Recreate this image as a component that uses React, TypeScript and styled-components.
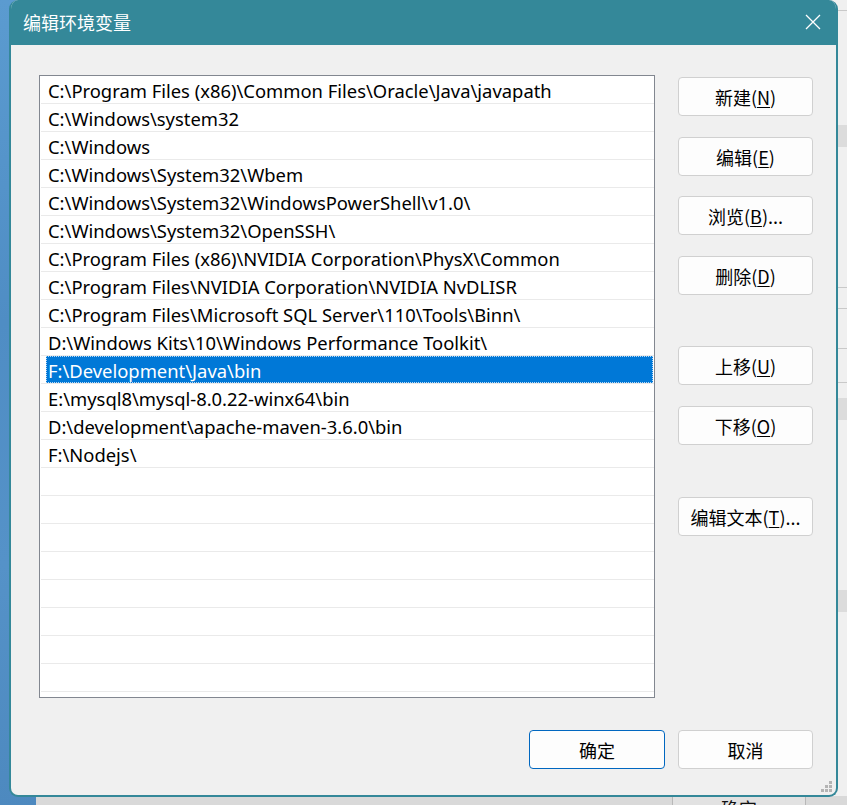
import React from "react";
import styled, { createGlobalStyle, css } from "styled-components";

const Global = createGlobalStyle`
  html, body { margin: 0; padding: 0; }
  body { width: 847px; height: 805px; overflow: hidden; background: #e9e9e9; }
  * { box-sizing: border-box; }
`;

const UI_FONT = `"Noto Sans", "Noto Sans CJK SC", sans-serif`;
const CJK_FONT = `"Noto Sans CJK SC", "Noto Sans", sans-serif`;

const Desktop = styled.div`
  position: relative;
  width: 847px;
  height: 805px;
  overflow: hidden;
  display: grid;
  grid-template-columns: 36px 1fr;
  background: #e6e6e6;
`;

const BlueStrip = styled.div`
  background: linear-gradient(180deg, #5b9bd0 0%, #4f8dc4 40%, #5592c8 70%, #4d89bf 100%);
`;

const GrayWindow = styled.div`
  background: #f0f0f0;
  display: flex;
  flex-direction: column;
`;

const BgLine = styled.div<{ $y: number; $band?: boolean }>`
  height: ${(p) => (p.$band ? 22 : 1)}px;
  margin-top: ${(p) => p.$y}px;
  background: ${(p) => (p.$band ? "#dcdcdc" : "#c9c9c9")};
`;

const BottomBar = styled.div`
  margin-top: auto;
  height: 9px;
  background: #d9d9d9;
  display: flex;
  padding-left: 636px;
`;

const BgButton = styled.div`
  width: 134px;
  border-left: 1px solid #b8b8b8;
  border-right: 1px solid #b8b8b8;
  background: #e2e2e2;
  font-family: ${CJK_FONT};
  font-size: 18px;
  line-height: 18px;
  color: #111;
  text-align: center;
  padding-top: 3px;
  overflow: hidden;
`;

const Dialog = styled.div`
  position: absolute;
  left: 9px;
  top: 0;
  width: 829px;
  height: 797px;
  border: 2px solid #348899;
  border-top: none;
  border-radius: 9px;
  background: #f0f0f0;
  overflow: hidden;
  display: flex;
  flex-direction: column;
`;

const TitleBar = styled.div`
  height: 45px;
  flex: none;
  background: #348899;
  display: flex;
  align-items: center;
  justify-content: space-between;
  padding: 0 17px 2px 12px;
  margin: 0 -2px;
`;

const Title = styled.div`
  font-family: ${CJK_FONT};
  font-size: 18px;
  color: #ffffff;
  padding-left: 2px;
`;

const CloseBtn = styled.div`
  width: 16px;
  height: 16px;
  display: flex;
`;

const Body = styled.div`
  flex: 1;
  display: flex;
  flex-direction: column;
  padding: 30px 23px 0 28px;
  position: relative;
`;

const Main = styled.div`
  display: flex;
  gap: 23px;
`;

const ListBox = styled.div`
  width: 616px;
  height: 623px;
  border: 1px solid #828790;
  background: #ffffff;
  overflow: hidden;
`;

const Row = styled.div`
  height: 28px;
  border-bottom: 1px solid #eaeaea;
  padding: 0 1px 0 5px;
  margin-left: 1px;
  display: flex;
`;

const Cell = styled.div<{ $selected?: boolean }>`
  flex: 1;
  height: 27px;
  font-family: ${UI_FONT};
  font-size: 18.4px;
  line-height: 29px;
  padding-left: 2px;
  white-space: nowrap;
  overflow: hidden;
  color: #000;
  ${(p) =>
    p.$selected &&
    css`
      background: #0078d7;
      color: #fff;
      outline: 1px dotted #b9d9f5;
      outline-offset: -1px;
    `}
`;

const ButtonColumn = styled.div`
  display: flex;
  flex-direction: column;
  padding-top: 2px;
`;

const Button = styled.div<{ $gapTop?: number; $primary?: boolean; $w?: number }>`
  width: ${(p) => p.$w ?? 135}px;
  height: 39px;
  margin-top: ${(p) => p.$gapTop ?? 0}px;
  background: #fdfdfd;
  border: 1px solid ${(p) => (p.$primary ? "#0067c0" : "#d0d0d0")};
  border-radius: 4px;
  display: flex;
  align-items: center;
  justify-content: center;
  font-family: ${CJK_FONT};
  font-size: 18px;
  color: #000;
  u { text-decoration: underline; text-underline-offset: 2px; text-decoration-thickness: 1px; }
`;

const Footer = styled.div`
  display: flex;
  justify-content: flex-end;
  gap: 13px;
  margin-top: 32px;
`;

const Grip = styled.svg`
  position: absolute;
  right: 4px;
  bottom: 3px;
`;

const paths = [
  "C:\\Program Files (x86)\\Common Files\\Oracle\\Java\\javapath",
  "C:\\Windows\\system32",
  "C:\\Windows",
  "C:\\Windows\\System32\\Wbem",
  "C:\\Windows\\System32\\WindowsPowerShell\\v1.0\\",
  "C:\\Windows\\System32\\OpenSSH\\",
  "C:\\Program Files (x86)\\NVIDIA Corporation\\PhysX\\Common",
  "C:\\Program Files\\NVIDIA Corporation\\NVIDIA NvDLISR",
  "C:\\Program Files\\Microsoft SQL Server\\110\\Tools\\Binn\\",
  "D:\\Windows Kits\\10\\Windows Performance Toolkit\\",
  "F:\\Development\\Java\\bin",
  "E:\\mysql8\\mysql-8.0.22-winx64\\bin",
  "D:\\development\\apache-maven-3.6.0\\bin",
  "F:\\Nodejs\\",
];

const rows = [...paths, ...Array(9).fill("")];

const sideButtons: { label: string; key: string; tail?: string; gap: number }[] = [
  { label: "新建", key: "N", gap: 0 },
  { label: "编辑", key: "E", gap: 21 },
  { label: "浏览", key: "B", tail: "...", gap: 20 },
  { label: "删除", key: "D", gap: 21 },
  { label: "上移", key: "U", gap: 51 },
  { label: "下移", key: "O", gap: 21 },
  { label: "编辑文本", key: "T", tail: "...", gap: 52 },
];

export default function App() {
  return (
    <>
      <Global />
      <Desktop>
        <BlueStrip />
        <GrayWindow>
          <BgLine $y={10} />
          <BgLine $y={114} $band />
          <BgLine $y={140} />
          <BgLine $y={20} />
          <BgLine $y={39} />
          <BgLine $y={33} />
          <BgLine $y={15} $band />
          <BgLine $y={170} $band />
          <BottomBar>
            <BgButton>确定</BgButton>
          </BottomBar>
        </GrayWindow>
        <Dialog>
          <TitleBar>
            <Title>编辑环境变量</Title>
            <CloseBtn>
              <svg width="16" height="16" viewBox="0 0 16 16">
                <path d="M1 1 L15 15 M15 1 L1 15" stroke="#ffffff" strokeWidth="1.3" fill="none" />
              </svg>
            </CloseBtn>
          </TitleBar>
          <Body>
            <Main>
              <ListBox>
                {rows.map((r, i) => (
                  <Row key={i}>
                    <Cell $selected={i === 10}>{r}</Cell>
                  </Row>
                ))}
              </ListBox>
              <ButtonColumn>
                {sideButtons.map((b) => (
                  <Button key={b.key} $gapTop={b.gap}>
                    {b.label}(<u>{b.key}</u>){b.tail ?? ""}
                  </Button>
                ))}
              </ButtonColumn>
            </Main>
            <Footer>
              <Button $primary $w={136}>确定</Button>
              <Button>取消</Button>
            </Footer>
            <Grip width="11" height="11" viewBox="0 0 11 11">
              {[
                [8, 0],
                [4, 4],
                [8, 4],
                [0, 8],
                [4, 8],
                [8, 8],
              ].map(([x, y], i) => (
                <rect key={i} x={x} y={y} width="3" height="3" fill="#b4b4b4" />
              ))}
            </Grip>
          </Body>
        </Dialog>
      </Desktop>
    </>
  );
}
